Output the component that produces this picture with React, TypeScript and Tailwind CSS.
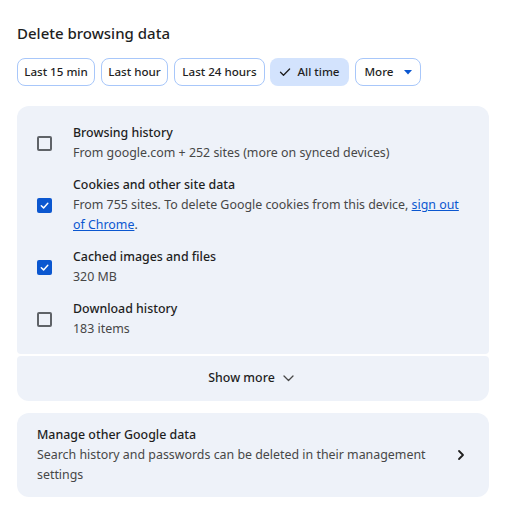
import React from "react";

function Check({ checked }: { checked: boolean }) {
  if (checked) {
    return (
      <div className="w-[15px] h-[15px] rounded-[2px] bg-[#0b57d0] flex items-center justify-center">
        <svg width="11" height="11" viewBox="0 0 12 12" fill="none">
          <path d="M2.5 6.2 L5 8.6 L9.6 3.6" stroke="white" strokeWidth="1.6" strokeLinecap="round" strokeLinejoin="round" />
        </svg>
      </div>
    );
  }
  return <div className="w-[15px] h-[15px] rounded-[2px] border-2 border-[#5f6368]" />;
}

function Row({ checked, title, children }: { checked: boolean; title: string; children: React.ReactNode }) {
  return (
    <div className="flex items-center">
      <div className="w-[56px] pl-[20px] flex items-center shrink-0">
        <Check checked={checked} />
      </div>
      <div className="flex-1 pr-[16px]">
        <div className="text-[12.4px] leading-[20px] font-medium text-[#1f1f1f]">{title}</div>
        <div className="text-[12.4px] leading-[20px] text-[#474747]">{children}</div>
      </div>
    </div>
  );
}

export default function App() {
  return (
    <div
      className="w-[506px] h-[509px] bg-white px-[17px] pt-[22px]"
      style={{ fontFamily: '"Noto Sans", "Open Sans", sans-serif' }}
    >
      <h1 className="text-[15px] leading-[22px] font-medium text-[#1f1f1f]">Delete browsing data</h1>
      <div className="flex gap-[6px] mt-[14px]">
        <div className="w-[78px] h-[28px] flex items-center justify-center rounded-[8px] border border-[#a8c7fa] text-[11.6px] font-medium text-[#1f1f1f] whitespace-nowrap">
          Last 15 min
        </div>
        <div className="w-[67px] h-[28px] flex items-center justify-center rounded-[8px] border border-[#a8c7fa] text-[11.6px] font-medium text-[#1f1f1f] whitespace-nowrap">
          Last hour
        </div>
        <div className="w-[91px] h-[28px] flex items-center justify-center rounded-[8px] border border-[#a8c7fa] text-[11.6px] font-medium text-[#1f1f1f] whitespace-nowrap">
          Last 24 hours
        </div>
        <div className="w-[79px] -ml-[1px] h-[28px] flex items-center justify-center gap-[6px] rounded-[8px] bg-[#d3e3fd] text-[11.6px] font-medium text-[#1f1f1f] whitespace-nowrap">
          <svg width="12" height="12" viewBox="0 0 12 12" fill="none">
            <path d="M1.5 6.3 L4.5 9.2 L10.6 3" stroke="#1f1f1f" strokeWidth="1.3" strokeLinecap="round" strokeLinejoin="round" />
          </svg>
          All time
        </div>
        <div className="w-[66px] h-[28px] flex items-center justify-center gap-[10px] rounded-[8px] border border-[#a8c7fa] text-[11.6px] font-medium text-[#1f1f1f] whitespace-nowrap">
          More
          <svg width="8" height="5" viewBox="0 0 8 5">
            <path d="M0 0 L8 0 L4 4.5 Z" fill="#0b57d0" />
          </svg>
        </div>
      </div>

      <div className="mt-[20px] rounded-t-[12px] rounded-b-[4px] bg-[#eef2f9] pt-[17px] pb-[15px] flex flex-col gap-[12px]">
        <Row checked={false} title="Browsing history">
          From google.com + 252 sites (more on synced devices)
        </Row>
        <Row checked={true} title="Cookies and other site data">
          <span className="whitespace-nowrap">
            From 755 sites. To delete Google cookies from this device,{" "}
            <span className="text-[#0b57d0] underline">sign out</span>
          </span>
          <br />
          <span className="text-[#0b57d0] underline">of Chrome</span>.
        </Row>
        <Row checked={true} title="Cached images and files">
          320 MB
        </Row>
        <Row checked={false} title="Download history">
          183 items
        </Row>
      </div>
      <div className="mt-[2px] h-[45px] rounded-t-[4px] rounded-b-[12px] bg-[#eef2f9] flex items-center justify-center gap-[8px] pr-[4px] text-[12.4px] font-medium text-[#1f1f1f]">
        Show more
        <svg width="11" height="7" viewBox="0 0 11 7" fill="none">
          <path d="M1 1 L5.5 5.5 L10 1" stroke="#474747" strokeWidth="1.3" strokeLinecap="round" strokeLinejoin="round" />
        </svg>
      </div>

      <div className="mt-[12px] rounded-[12px] bg-[#eef2f9] pl-[20px] pr-[24px] pt-[12px] pb-[12px] flex items-center">
        <div className="flex-1 pr-[16px]">
          <div className="text-[12.4px] leading-[20px] font-medium text-[#1f1f1f]">Manage other Google data</div>
          <div className="text-[12.4px] leading-[20px] text-[#474747]">
            Search history and passwords can be deleted in their management settings
          </div>
        </div>
        <svg width="8" height="12" viewBox="0 0 8 12" fill="none">
          <path d="M2 2 L6 6 L2 10" stroke="#1f1f1f" strokeWidth="1.8" strokeLinecap="round" strokeLinejoin="round" />
        </svg>
      </div>
    </div>
  );
}
